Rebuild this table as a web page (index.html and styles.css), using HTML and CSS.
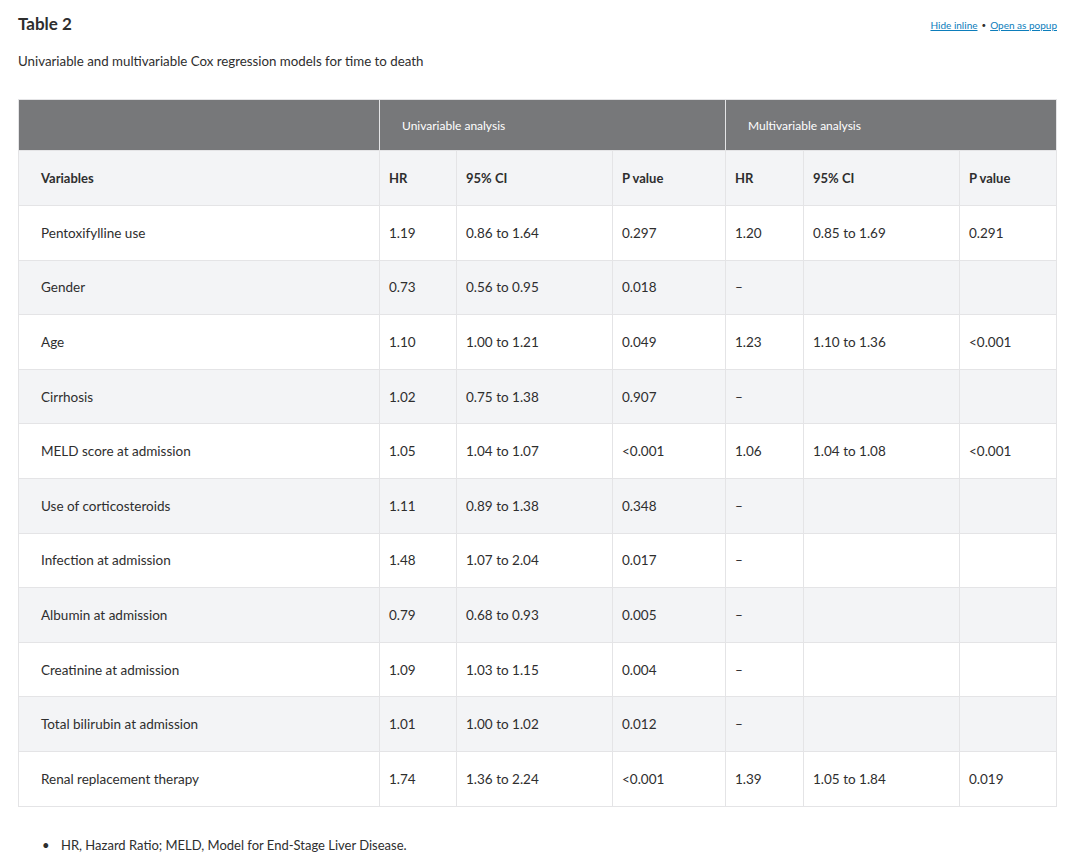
FILE: index.html
```html
<!DOCTYPE html>
<html lang="en">
<head>
<meta charset="utf-8">
<title>Table 2</title>
<link rel="stylesheet" href="styles.css">
</head>
<body>
<div class="page">
  <div class="caption-bar">
    <h2 class="title">Table 2</h2>
    <div class="links"><a href="#">Hide inline</a><span class="dot">•</span><a href="#">Open as popup</a></div>
  </div>
  <p class="subtitle">Univariable and multivariable Cox regression models for time to death</p>
  <table class="data">
    <colgroup>
      <col class="c1"><col class="c2"><col class="c3"><col class="c4"><col class="c5"><col class="c6"><col class="c7">
    </colgroup>
    <thead>
      <tr class="group-row">
        <th></th>
        <th colspan="3" class="group">Univariable analysis</th>
        <th colspan="3" class="group">Multivariable analysis</th>
      </tr>
      <tr class="head-row">
        <th class="first">Variables</th>
        <th>HR</th><th>95% CI</th><th>P value</th>
        <th>HR</th><th>95% CI</th><th>P value</th>
      </tr>
    </thead>
    <tbody>
      <tr><td class="first">Pentoxifylline use</td><td>1.19</td><td>0.86 to 1.64</td><td>0.297</td><td>1.20</td><td>0.85 to 1.69</td><td>0.291</td></tr>
      <tr><td class="first">Gender</td><td>0.73</td><td>0.56 to 0.95</td><td>0.018</td><td>–</td><td></td><td></td></tr>
      <tr><td class="first">Age</td><td>1.10</td><td>1.00 to 1.21</td><td>0.049</td><td>1.23</td><td>1.10 to 1.36</td><td>&lt;0.001</td></tr>
      <tr><td class="first">Cirrhosis</td><td>1.02</td><td>0.75 to 1.38</td><td>0.907</td><td>–</td><td></td><td></td></tr>
      <tr><td class="first">MELD score at admission</td><td>1.05</td><td>1.04 to 1.07</td><td>&lt;0.001</td><td>1.06</td><td>1.04 to 1.08</td><td>&lt;0.001</td></tr>
      <tr><td class="first">Use of corticosteroids</td><td>1.11</td><td>0.89 to 1.38</td><td>0.348</td><td>–</td><td></td><td></td></tr>
      <tr><td class="first">Infection at admission</td><td>1.48</td><td>1.07 to 2.04</td><td>0.017</td><td>–</td><td></td><td></td></tr>
      <tr><td class="first">Albumin at admission</td><td>0.79</td><td>0.68 to 0.93</td><td>0.005</td><td>–</td><td></td><td></td></tr>
      <tr><td class="first">Creatinine at admission</td><td>1.09</td><td>1.03 to 1.15</td><td>0.004</td><td>–</td><td></td><td></td></tr>
      <tr><td class="first">Total bilirubin at admission</td><td>1.01</td><td>1.00 to 1.02</td><td>0.012</td><td>–</td><td></td><td></td></tr>
      <tr><td class="first">Renal replacement therapy</td><td>1.74</td><td>1.36 to 2.24</td><td>&lt;0.001</td><td>1.39</td><td>1.05 to 1.84</td><td>0.019</td></tr>
    </tbody>
  </table>
  <ul class="notes">
    <li>HR, Hazard Ratio; MELD, Model for End-Stage Liver Disease.</li>
  </ul>
</div>
</body>
</html>
```
FILE: styles.css
```css
html, body {
  margin: 0;
  padding: 0;
  background: #ffffff;
}
body {
  font-family: "Lato", "Liberation Sans", Arial, sans-serif;
  color: #2e2e2e;
}
.page {
  padding: 14px 15px 0 18px;
}
.caption-bar {
  display: flex;
  justify-content: space-between;
  align-items: center;
}
.title {
  margin: 0;
  font-size: 17px;
  font-weight: 700;
  line-height: 20px;
  color: #2e2e2e;
}
.links {
  font-size: 10px;
  color: #0c7dbb;
  display: flex;
  align-items: center;
  gap: 4px;
  margin-top: 2px;
}
.links a {
  color: #0c7dbb;
  text-decoration: underline;
}
.links .dot {
  color: #2e2e2e;
  font-size: 8px;
}
.subtitle {
  margin: 18px 0 29px 0;
  font-size: 13.3px;
  line-height: 18px;
}
.data {
  width: 1038px;
  border-collapse: collapse;
  table-layout: fixed;
  font-size: 13.5px;
}
.c1 { width: 361px; }
.c2 { width: 77px; }
.c3 { width: 156px; }
.c4 { width: 113px; }
.c5 { width: 78px; }
.c6 { width: 156px; }
.c7 { width: 97px; }
.data th, .data td {
  border: 1px solid #e4e4e6;
  text-align: left;
  padding: 0 9px;
  vertical-align: middle;
}
.data .first {
  padding-left: 22px;
}
.group-row th {
  background: #77787a;
  height: 50px;
  color: #ffffff;
  font-weight: 400;
  font-size: 12px;
  padding-left: 22px;
}
.head-row th {
  background: #f3f4f6;
  height: 54px;
  font-weight: 700;
  font-size: 13px;
  color: #2e2e2e;
}
.data td {
  height: 53.6px;
}
.data tbody tr:nth-child(even) td {
  background: #f3f4f6;
}
.notes {
  list-style: none;
  margin: 29px 0 0 24px;
  padding: 0;
  font-size: 13px;
  line-height: 18px;
}
.notes li::before {
  content: "•";
  display: inline-block;
  width: 19px;
}
```
